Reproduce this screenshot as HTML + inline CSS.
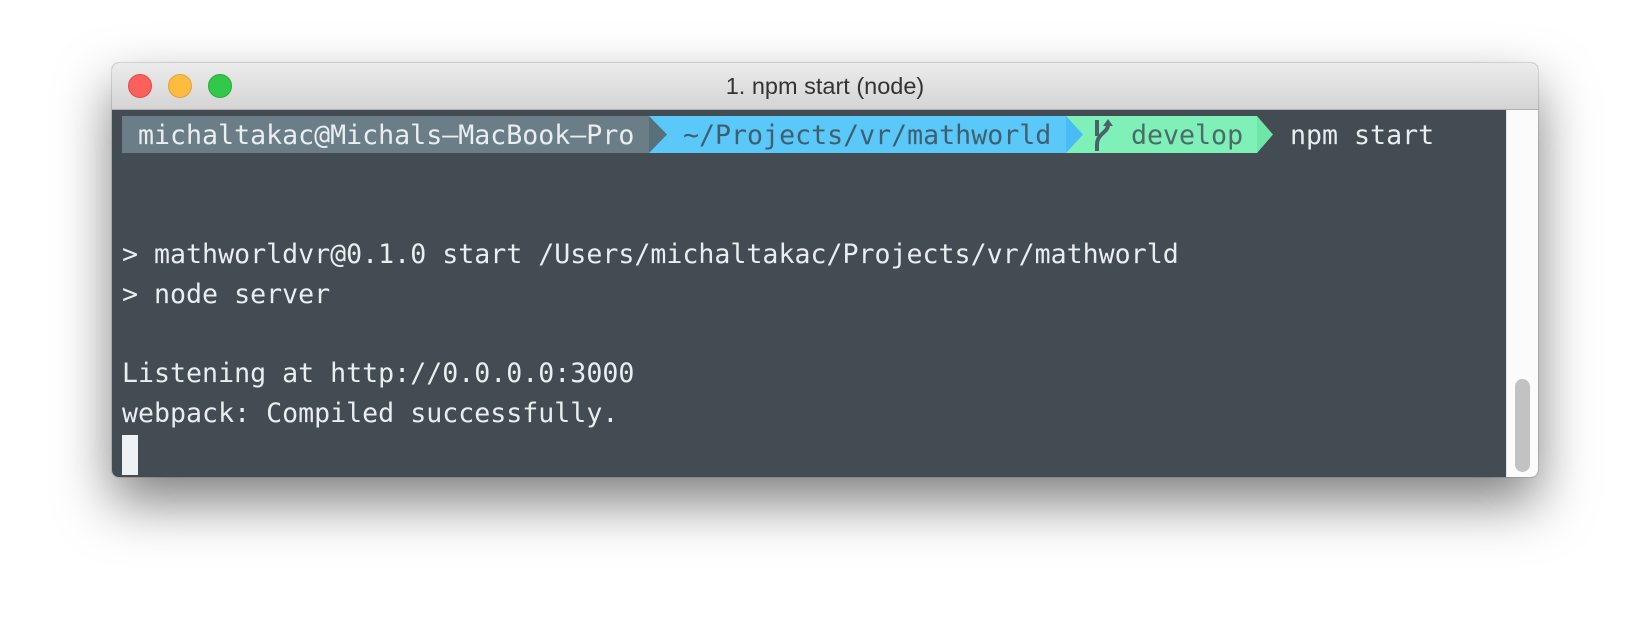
<!DOCTYPE html>
<html><head><style>
html,body{margin:0;padding:0;background:#fff;width:1650px;height:638px;overflow:hidden;}
.win{position:absolute;left:112px;top:63px;width:1426px;height:414px;border-radius:7px;overflow:hidden;box-shadow:0 25px 55px rgba(0,0,0,0.5),0 0 0 1px rgba(0,0,0,0.12);background:#424c52;}
.title{position:absolute;left:0;top:0;width:100%;height:46px;background:linear-gradient(#ececec,#d4d4d4);border-bottom:1px solid #b0b0b0;}
.title .t{position:absolute;left:0;right:0;top:10px;text-align:center;font:23.5px "Liberation Sans",sans-serif;color:#333;}
.dot{position:absolute;top:11px;width:24px;height:24px;border-radius:50%;}
.term{position:absolute;left:0;top:47px;width:1395px;height:367px;}
.mono{font-family:"DejaVu Sans Mono","Liberation Mono",monospace;font-size:26.6px;color:#e9eef0;white-space:pre;position:absolute;line-height:38px;}
.sb{position:absolute;right:0;top:47px;width:31px;height:367px;background:#fbfbfb;border-left:1px solid #e4e4e4;}
.thumb{position:absolute;left:8px;top:269px;width:15px;height:93px;border-radius:8px;background:#c2c2c2;}
.seg{position:absolute;top:6px;height:37px;}
</style></head><body>
<div class="win">
 <div class="title">
  <div class="dot" style="left:16px;background:#fc605c;border:1px solid #de4a46;width:22px;height:22px"></div>
  <div class="dot" style="left:56px;background:#fdbc40;border:1px solid #dea236;width:22px;height:22px"></div>
  <div class="dot" style="left:96px;background:#34c84a;border:1px solid #27aa37;width:22px;height:22px"></div>
  <div class="t">1. npm start (node)</div>
 </div>
 <div class="term">
  <div class="seg" style="left:10px;width:527px;background:#6b7e87"></div>
  <div class="seg" style="left:537px;width:417px;background:#5bc8fa"></div>
  <div class="seg" style="left:954px;width:191px;background:#7ef0b8"></div>
  <svg style="position:absolute;left:0;top:6px" width="1200" height="37">
   <polygon points="537,0 555,18.5 537,37" fill="#587079"/>
   <polygon points="954,0 971,18.5 954,37" fill="#49bcf6"/>
   <polygon points="1145,0 1161,18.5 1145,37" fill="#6ee6a6"/>
   <g stroke="#4a626a" stroke-width="4" fill="none">
    <path d="M985 4 L985 20"/>
    <path d="M985 35 L985 28 Q985 22 991 17 Q996 13 996 9"/>
   </g>
   <polygon points="991,10 996,3 1001,10" fill="#4a626a"/>
  </svg>
  <div class="mono" style="left:26px;top:7px">michaltakac@Michals—MacBook—Pro</div>
  <div class="mono" style="left:571px;top:7px;color:#3f5f6e">~/Projects/vr/mathworld</div>
  <div class="mono" style="left:1019px;top:7px;color:#4c6b68">develop</div>
  <div class="mono" style="left:1178px;top:7px">npm start</div>
  <div class="mono" style="left:10px;top:126px">&gt; mathworldvr@0.1.0 start /Users/michaltakac/Projects/vr/mathworld</div>
  <div class="mono" style="left:10px;top:166px">&gt; node server</div>
  <div class="mono" style="left:10px;top:245px">Listening at http://0.0.0.0:3000</div>
  <div class="mono" style="left:10px;top:285px">webpack: Compiled successfully.</div>
  <div style="position:absolute;left:10px;top:325px;width:16px;height:40px;background:#eef2f4"></div>
 </div>
 <div class="sb"><div class="thumb"></div></div>
</div>
</body></html>
